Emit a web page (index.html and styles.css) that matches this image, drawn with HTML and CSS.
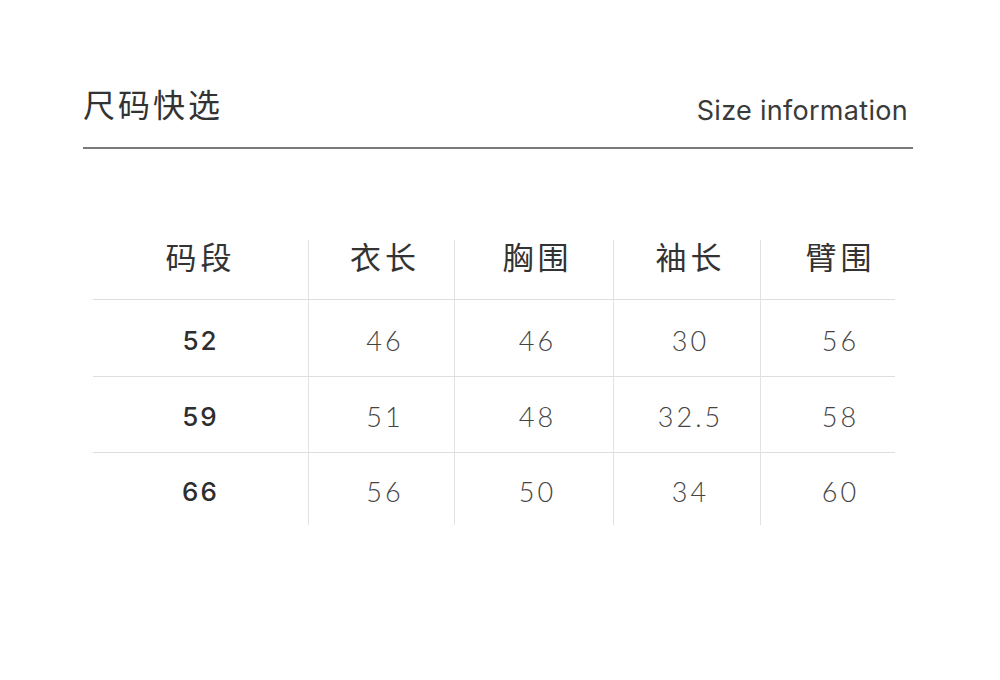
FILE: index.html
```html
<!DOCTYPE html>
<html lang="zh">
<head>
<meta charset="utf-8">
<title>尺码快选</title>
<link rel="stylesheet" href="styles.css">
</head>
<body>
<div class="page">
  <header class="head">
    <h1 class="title">尺码快选</h1>
    <div class="subtitle">Size information</div>
  </header>
  <div class="table">
    <div class="cell th c1">码段</div>
    <div class="cell th c2">衣长</div>
    <div class="cell th c3">胸围</div>
    <div class="cell th c4">袖长</div>
    <div class="cell th c5">臂围</div>

    <div class="cell td key c1 r1">52</div>
    <div class="cell td c2 r1">46</div>
    <div class="cell td c3 r1">46</div>
    <div class="cell td c4 r1">30</div>
    <div class="cell td c5 r1">56</div>

    <div class="cell td key c1 r2">59</div>
    <div class="cell td c2 r2">51</div>
    <div class="cell td c3 r2">48</div>
    <div class="cell td c4 r2">32.5</div>
    <div class="cell td c5 r2">58</div>

    <div class="cell td key c1 r3">66</div>
    <div class="cell td c2 r3">56</div>
    <div class="cell td c3 r3">50</div>
    <div class="cell td c4 r3">34</div>
    <div class="cell td c5 r3">60</div>
  </div>
</div>
</body>
</html>
```

FILE: styles.css
```css
html, body {
  margin: 0;
  padding: 0;
  background: #ffffff;
}

.page {
  width: 1000px;
  height: 680px;
  box-sizing: border-box;
  padding: 87px 87px 0 83px;
  font-family: "Noto Sans CJK SC", "Noto Sans", sans-serif;
  color: #333;
}

.head {
  display: flex;
  justify-content: space-between;
  align-items: flex-end;
  height: 60px;
  border-bottom: 2px solid #7a7a7a;
}

.title {
  margin: 0;
  font-size: 32px;
  line-height: 32px;
  font-weight: 400;
  letter-spacing: 3px;
  align-self: flex-start;
  color: #333;
}

.subtitle {
  font-family: "Inter", "Noto Sans", sans-serif;
  font-size: 27px;
  line-height: 28px;
  font-weight: 400;
  letter-spacing: 0.3px;
  color: #3a3a3a;
  padding-bottom: 22px;
  margin-right: 5px;
}

.table {
  margin: 91px 0 0 10px;
  width: 802px;
  display: grid;
  grid-template-columns: 215px 146px 159px 147px 135px;
  grid-template-rows: 59px 77px 76px 73px;
}

.cell {
  display: flex;
  justify-content: center;
  align-items: center;
  box-sizing: border-box;
}

.c2, .c3, .c4, .c5 {
  border-left: 1px solid #e2e2e2;
}

.c2, .c3, .c4 { padding-left: 7px; }
.c5 { padding-left: 25px; }

.th {
  align-items: flex-start;
  padding-top: 0;
  font-size: 31px;
  line-height: 32px;
  letter-spacing: 4px;
  color: #333;
}

.td {
  border-top: 1px solid #dedede;
  font-family: "Lato", "Noto Sans", sans-serif;
  font-size: 27px;
  font-weight: 300;
  letter-spacing: 3px;
  color: #444;
  padding-top: 4px;
}

.key {
  font-weight: 500;
  font-family: "Inter", "Noto Sans", sans-serif;
  font-size: 26px;
  letter-spacing: 2px;
  color: #2e2e2e;
}
```
